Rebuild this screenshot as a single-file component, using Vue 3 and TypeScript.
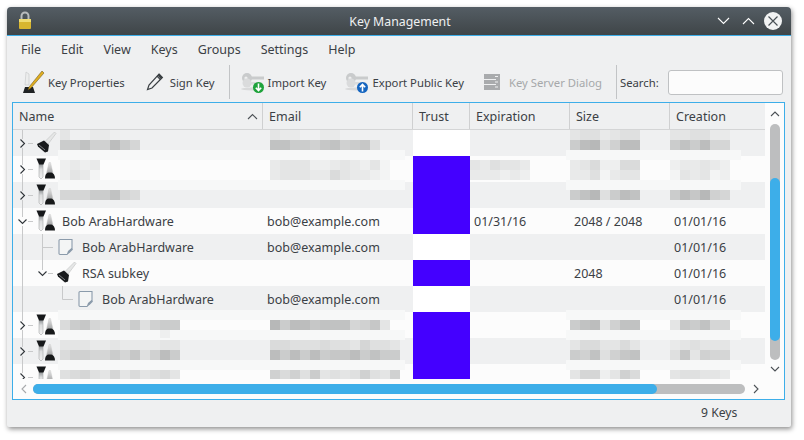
<script setup lang="ts">
interface Blur { top: number; lines: string[] }
interface Row {
  level: number
  tree: string[]
  icon: 'pair' | 'key' | 'note'
  name?: string
  email?: string
  trust: boolean
  exp?: string
  size?: string
  created?: string
  bName?: Blur
  bEmail?: Blur
  bExp?: Blur
  bSize?: Blur
  bCreated?: Blur
}

const rows: Row[] = [
  { level: 0, tree: ['closed'], icon: 'key', trust: false,
    bName: { top: 0, lines: ['c..dde.', '77588479'] },
    bEmail: { top: 0, lines: ['cdd..dd', '5577865876b'] },
    bSize: { top: 0, lines: ['cbbdcbb', '743b844'] },
    bCreated: { top: 0, lines: ['ccbbdd', '757499'] } },
  { level: 0, tree: ['closed'], icon: 'pair', trust: true,
    bName: { top: 4, lines: ['eded', 'ecdf'] },
    bEmail: { top: 4, lines: ['dccceedcdecf', 'dcccddacddef'] },
    bExp: { top: 4, lines: ['cdbccd', 'dddede'] },
    bSize: { top: 4, lines: ['dcaeeaa', 'ddbfdcc'] },
    bCreated: { top: 4, lines: ['eddcde', 'fcdcfe'] } },
  { level: 0, tree: ['closed'], icon: 'pair', trust: true,
    bName: { top: 8, lines: ['9997759a'] },
    bSize: { top: 8, lines: ['753b745'] },
    bCreated: { top: 8, lines: ['746389'] } },
  { level: 0, tree: ['open'], icon: 'pair', name: 'Bob ArabHardware', email: 'bob@example.com', trust: true,
    exp: '01/31/16', size: '2048 / 2048', created: '01/01/16' },
  { level: 1, tree: ['pass', 'tee'], icon: 'note', name: 'Bob ArabHardware', email: 'bob@example.com', trust: false,
    created: '01/01/16' },
  { level: 1, tree: ['pass', 'open'], icon: 'key', name: 'RSA subkey', trust: true, size: '2048', created: '01/01/16' },
  { level: 2, tree: ['pass', 'none', 'ell'], icon: 'note', name: 'Bob ArabHardware', email: 'bob@example.com', trust: false,
    created: '01/01/16' },
  { level: 0, tree: ['closed'], icon: 'pair', trust: true,
    bName: { top: 8, lines: ['a769a6a7b877', '..........e.'] },
    bEmail: { top: 8, lines: ['37446555986c'] },
    bSize: { top: 8, lines: ['754c855'] },
    bCreated: { top: 8, lines: ['c67599'] } },
  { level: 0, tree: ['closed'], icon: 'pair', trust: true,
    bName: { top: 2, lines: ['cccddcddddcc', 'a8899796b847'] },
    bEmail: { top: 2, lines: ['aabbbabbc9bbc', '4747476647577'] },
    bSize: { top: 2, lines: ['caaccac', '785b865'] },
    bCreated: { top: 2, lines: ['dcbccc', 'b6c899'] } },
  { level: 0, tree: ['closed'], icon: 'pair', trust: true,
    bName: { top: 6, lines: ['ba9bc9cacbac'] },
    bEmail: { top: 6, lines: ['8a8b7cbcb8bc8'] },
    bSize: { top: 6, lines: ['c99ec8a'] },
    bCreated: { top: 6, lines: ['cbbccd'] } },
]

const bands = [150, 180, 310, 330, 360].flatMap((y) => [
  { left: 45, top: y - 130, width: 347, height: 10 },
  { left: 553, top: y - 130, width: 175, height: 10 },
])

const menu = ['File', 'Edit', 'View', 'Keys', 'Groups', 'Settings', 'Help']
const columns = ['Name', 'Email', 'Trust', 'Expiration', 'Size', 'Creation']

function shade(c: string): string {
  if (c === '.') return 'transparent'
  const v = 168 + parseInt(c, 16) * 5
  return `rgb(${v},${v + 1},${v + 1})`
}
function chars(line: string): string[] {
  return line.split('')
}
</script>

<template>
  <div class="page">
    <div class="window">
      <header class="titlebar">
        <svg class="lock" width="14" height="19" viewBox="0 0 14 19">
          <path d="M3.500 8V5a3.500 3.500 0 0 1 7 0v3" fill="none" stroke="#b9bcbd" stroke-width="2" />
          <rect x="1" y="8" width="12" height="10" rx="1" fill="#d8b62f" />
          <rect x="1" y="8" width="12" height="3" fill="#efdc72" />
        </svg>
        <span class="title">Key Management</span>
        <div class="winbtns">
          <svg width="13" height="8" viewBox="0 0 13 8"><path d="M1 1l5.500 5.500L12 1" fill="none" stroke="#fcfcfc" stroke-width="1.100" /></svg>
          <svg width="13" height="8" viewBox="0 0 13 8"><path d="M1 7l5.500-5.500L12 7" fill="none" stroke="#fcfcfc" stroke-width="1.100" /></svg>
          <svg class="close" width="18" height="18" viewBox="0 0 18 18"><circle cx="9" cy="9" r="9" fill="#f2f3f3" /><path d="M4.500 4.500l9 9M13.500 4.500l-9 9" stroke="#4a5156" stroke-width="1.200" /></svg>
        </div>
      </header>

      <nav class="menubar">
        <span v-for="m in menu" :key="m">{{ m }}</span>
      </nav>

      <div class="toolbar">
        <div class="tool first">
          <svg width="24" height="24" viewBox="0 0 24 24">
            <path d="M5 2l3 2v11H4z" fill="#eceded" stroke="#c4c6c7" stroke-width=".6" />
            <path d="M2 23l2-6h8l2 6z" fill="#1f2224" />
            <path d="M21 1L8 17l-1 3 3-2L23 3z" fill="#e0ae21" stroke="#5c4a12" stroke-width=".5" />
          </svg>
          <span>Key Properties</span>
        </div>
        <div class="tool sign">
          <svg width="18" height="20" viewBox="0 0 18 20">
            <path d="M13 2l3.400 3.400L6 16l-4.500 1.600L3 13z" fill="none" stroke="#3a3f43" stroke-width="1.200" />
            <path d="M11 4.200l3.400 3.400" stroke="#3a3f43" stroke-width="1.200" />
            <path d="M13 2l3.400 3.400-1.600 1.600L11.400 3.600z" fill="#3a3f43" />
          </svg>
          <span>Sign Key</span>
        </div>
        <div class="sep sep-a"></div>
        <div class="tool imp">
          <svg width="24" height="24" viewBox="0 0 24 24">
            <ellipse cx="11" cy="19" rx="11" ry="1.500" fill="#d8d9da" />
            <circle cx="6" cy="8" r="5" fill="#c9cbcc" />
            <circle cx="5" cy="8" r="1.600" fill="#eeefef" />
            <rect x="10" y="6.500" width="13" height="3" fill="#c9cbcc" />
            <circle cx="6" cy="13" r="4.500" fill="#dadbdc" />
            <rect x="10" y="12" width="11" height="2.500" fill="#dadbdc" />
            <circle cx="17.500" cy="17.500" r="5.500" fill="#1fa33c" />
            <path d="M17.500 13.500v7M14.800 17.700l2.700 2.800 2.700-2.800" fill="none" stroke="#fff" stroke-width="1.600" />
          </svg>
          <span>Import Key</span>
        </div>
        <div class="tool exp">
          <svg width="24" height="24" viewBox="0 0 24 24">
            <ellipse cx="11" cy="19" rx="11" ry="1.500" fill="#d8d9da" />
            <circle cx="6" cy="8" r="5" fill="#c9cbcc" />
            <circle cx="5" cy="8" r="1.600" fill="#eeefef" />
            <rect x="10" y="6.500" width="13" height="3" fill="#c9cbcc" />
            <circle cx="6" cy="13" r="4.500" fill="#dadbdc" />
            <rect x="10" y="12" width="11" height="2.500" fill="#dadbdc" />
            <circle cx="17.500" cy="17.500" r="5.500" fill="#1565c0" />
            <path d="M17.500 21.500v-7M14.800 17.300l2.700-2.800 2.700 2.800" fill="none" stroke="#fff" stroke-width="1.600" />
          </svg>
          <span>Export Public Key</span>
        </div>
        <div class="tool srv">
          <svg width="16" height="16" viewBox="0 0 16 16">
            <rect width="16" height="16" fill="#a9abad" />
            <path d="M0 5.500h12M0 10.500h12M11 2.500h3M11 8h3M11 13h3" stroke="#eff0f1" stroke-width="1" />
          </svg>
          <span>Key Server Dialog</span>
        </div>
        <div class="sep sep-b"></div>
        <label class="search">Search:<input type="text" /></label>
      </div>

      <section class="frame">
        <div class="view">
          <div class="table">
            <div class="head">
              <div v-for="c in columns" :key="c" class="hcell">
                {{ c }}
                <svg v-if="c === 'Name'" class="sort" width="11" height="7" viewBox="0 0 11 7"><path d="M1 6l4.500-4.500L10 6" fill="none" stroke="#4d5257" stroke-width="1.100" /></svg>
              </div>
            </div>
            <div class="body">
              <div v-for="(r, i) in rows" :key="i" class="row">
                <div class="cell namecell">
                  <svg v-for="(t, j) in r.tree" :key="j" class="branch" width="20" height="26" viewBox="0 0 20 26">
                    <path v-if="t === 'closed' || t === 'open'" :d="j === 0 ? 'M9.500 0V9M9.500 18V26M15 13.500H20' : 'M9.500 0V10M15 13.500H20'" stroke="#c8c9ca" fill="none" />
                    <path v-if="t === 'closed'" d="M7.500 9.500l4 4-4 4" fill="none" stroke="#31363b" stroke-width="1.100" />
                    <path v-if="t === 'open'" d="M5.500 11.500l4 4 4-4" fill="none" stroke="#31363b" stroke-width="1.100" />
                    <path v-if="t === 'pass'" d="M9.500 0V26" stroke="#c8c9ca" />
                    <path v-if="t === 'tee'" d="M9.500 0V26M9.500 13.500H20" stroke="#c8c9ca" fill="none" />
                    <path v-if="t === 'ell'" d="M9.500 0V13.500H20" stroke="#c8c9ca" fill="none" />
                  </svg>
                  <div class="iconbox">
                    <svg v-if="r.icon === 'pair'" width="22" height="24" viewBox="0 0 22 24">
                      <defs>
                        <linearGradient id="shaft" x1="0" y1="0" x2="0" y2="1"><stop offset="0" stop-color="#8d9194" /><stop offset=".35" stop-color="#dcddde" /><stop offset="1" stop-color="#f2f2f2" /></linearGradient>
                        <linearGradient id="cone" x1="0" y1="0" x2="0" y2="1"><stop offset="0" stop-color="#e6e6e6" /><stop offset="1" stop-color="#a4a5a6" /></linearGradient>
                      </defs>
                      <path d="M3 7h4v13l-2 2-2-2z" fill="url(#shaft)" stroke="#a6a8a9" stroke-width=".6" />
                      <path d="M.5 1.500h9.500L7.500 7.500h-4.500z" fill="#16181a" />
                      <path d="M13 5.500h1.500l2.500 10.500h-6.500z" fill="url(#cone)" stroke="#c4c5c6" stroke-width=".4" />
                      <path d="M9 21.500c0-3 1-5.500 3-6h3.500c2 .5 3.500 3 3.500 6z" fill="#17191a" />
                    </svg>
                    <svg v-else-if="r.icon === 'key'" width="22" height="24" viewBox="0 0 22 24">
                      <path d="M18.500 1l1.500 1.500-9 12-3-3z" fill="#e5e6e6" stroke="#b6b8b9" stroke-width=".5" />
                      <path d="M8 9.500l5 4.500-1 6.500-3 1-7-6-1-2.500z" fill="#191b1d" />
                      <path d="M3 14l6 5" stroke="#7d8083" stroke-width="1" />
                    </svg>
                    <svg v-else width="16" height="18" viewBox="0 0 16 18" class="note">
                      <path d="M1 2.500a1 1 0 0 1 1-1h12v9l-5 6H2a1 1 0 0 1-1-1z" fill="#f4f5f5" stroke="#8b9bab" stroke-width="1.100" />
                      <path d="M9 16l1-3 3.500-3 1.500 1.500-3.500 3.500z" fill="#8b9bab" />
                    </svg>
                  </div>
                  <span v-if="r.name">{{ r.name }}</span>
                  <div v-if="r.bName" class="blur" :style="{ marginTop: r.bName.top + 'px' }">
                    <div v-for="(l, k) in r.bName.lines" :key="k" class="bline">
                      <i v-for="(c, n) in chars(l)" :key="n" :style="{ background: shade(c) }"></i>
                    </div>
                  </div>
                </div>

                <div class="cell emailcell">
                  <span v-if="r.email">{{ r.email }}</span>
                  <div v-if="r.bEmail" class="blur" :style="{ marginTop: r.bEmail.top + 'px' }">
                    <div v-for="(l, k) in r.bEmail.lines" :key="k" class="bline">
                      <i v-for="(c, n) in chars(l)" :key="n" :style="{ background: shade(c) }"></i>
                    </div>
                  </div>
                </div>

                <div class="cell" :class="r.trust ? 'trusted' : 'untrusted'"></div>

                <div class="cell expcell">
                  <span v-if="r.exp">{{ r.exp }}</span>
                  <div v-if="r.bExp" class="blur" :style="{ marginTop: r.bExp.top + 'px' }">
                    <div v-for="(l, k) in r.bExp.lines" :key="k" class="bline">
                      <i v-for="(c, n) in chars(l)" :key="n" :style="{ background: shade(c) }"></i>
                    </div>
                  </div>
                </div>

                <div class="cell numcell">
                  <span v-if="r.size">{{ r.size }}</span>
                  <div v-if="r.bSize" class="blur" :style="{ marginTop: r.bSize.top + 'px' }">
                    <div v-for="(l, k) in r.bSize.lines" :key="k" class="bline">
                      <i v-for="(c, n) in chars(l)" :key="n" :style="{ background: shade(c) }"></i>
                    </div>
                  </div>
                </div>

                <div class="cell numcell">
                  <span v-if="r.created">{{ r.created }}</span>
                  <div v-if="r.bCreated" class="blur" :style="{ marginTop: r.bCreated.top + 'px' }">
                    <div v-for="(l, k) in r.bCreated.lines" :key="k" class="bline">
                      <i v-for="(c, n) in chars(l)" :key="n" :style="{ background: shade(c) }"></i>
                    </div>
                  </div>
                </div>
              </div>

              <div
                v-for="(b, i) in bands"
                :key="'b' + i"
                class="band"
                :style="{ left: b.left + 'px', top: b.top + 'px', width: b.width + 'px', height: b.height + 'px' }"
              ></div>
            </div>
          </div>

          <aside class="vscroll">
            <svg width="10" height="7" viewBox="0 0 10 7"><path d="M1 6l4-4 4 4" fill="none" stroke="#4d5257" stroke-width="1.100" /></svg>
            <div class="vtrack"><div class="vthumb"></div></div>
            <svg width="10" height="7" viewBox="0 0 10 7"><path d="M1 1l4 4 4-4" fill="none" stroke="#4d5257" stroke-width="1.100" /></svg>
          </aside>
        </div>

        <div class="hscroll">
          <svg width="7" height="10" viewBox="0 0 7 10"><path d="M6 1L2 5l4 4" fill="none" stroke="#a8aaac" stroke-width="1.100" /></svg>
          <div class="htrack"><div class="hthumb"></div></div>
          <svg width="7" height="10" viewBox="0 0 7 10"><path d="M1 1l4 4-4 4" fill="none" stroke="#4d5257" stroke-width="1.100" /></svg>
        </div>
      </section>

      <footer class="status">9 Keys</footer>
    </div>
  </div>
</template>

<style scoped>
.page {
  width: 804px;
  height: 440px;
  padding: 7px 13px 0 7px;
  box-sizing: border-box;
  background: #fff;
  font-family: "Noto Sans", "Open Sans", sans-serif;
  font-size: 12.5px;
  color: #3b4045;
  overflow: hidden;
}
.window {
  width: 784px;
  height: 420px;
  background: #eff0f1;
  border-radius: 4px 4px 2px 2px;
  box-shadow: 1px 2px 5px rgba(0, 0, 0, 0.45);
  display: flex;
  flex-direction: column;
  overflow: hidden;
}
.titlebar {
  height: 28px;
  flex: none;
  border-bottom: 1px solid #3daee9;
  background: linear-gradient(#545d64, #3f4548);
  color: #eff0f1;
  display: grid;
  grid-template-columns: 1fr auto 1fr;
  align-items: center;
  padding: 0 9px 0 11px;
}
.lock { display: block; margin-top: -2px; }
.title { font-size: 12.3px; }
.winbtns {
  justify-self: end;
  display: flex;
  align-items: center;
  gap: 12px;
}
.close { margin-left: -3px; }
.menubar {
  height: 26px;
  padding-bottom: 4px;
  flex: none;
  display: flex;
  align-items: center;
  padding-left: 14px;
  gap: 20px;
}
.toolbar {
  height: 32px;
  padding-bottom: 4px;
  flex: none;
  display: flex;
  align-items: center;
  padding-left: 14px;
  font-size: 11.3px;
}
.tool { display: flex; align-items: center; gap: 3px; white-space: nowrap; }
.sign { margin-left: 21px; gap: 6px; }
.sep { width: 1px; height: 34px; background: #c2c4c6; }
.sep-a { margin-left: 14px; }
.imp { margin-left: 11px; gap: 3px; }
.exp { margin-left: 19px; gap: 3px; }
.srv { margin-left: 20px; gap: 9px; color: #a6a8aa; }
.sep-b { margin-left: 14px; }
.search { display: flex; align-items: center; gap: 9px; margin-left: 3px; }
.search input {
  width: 115px;
  height: 25px;
  box-sizing: border-box;
  border: 1px solid #bfc1c3;
  border-radius: 3px;
  background: #fcfcfc;
  padding: 0;
  margin: 0;
  outline: none;
}
.frame {
  width: 773px;
  height: 298px;
  margin-left: 5px;
  box-sizing: border-box;
  border: 1px solid #3daee9;
  background: #fcfcfc;
  display: flex;
  flex-direction: column;
  flex: none;
}
.view { display: flex; height: 276px; flex: none; }
.table { width: 752px; flex: none; }
.head {
  display: grid;
  grid-template-columns: 250px 150px 57px 100px 100px 95px;
  height: 27px;
  box-sizing: border-box;
  border-bottom: 1px solid #d4d5d6;
  background: #eff0f1;
}
.hcell {
  display: flex;
  align-items: center;
  padding-left: 6px;
  border-right: 1px solid #cfd0d1;
  box-sizing: border-box;
}
.hcell:last-child { border-right: 0; }
.sort { margin-left: auto; margin-right: 4px; }
.body { position: relative; height: 249px; overflow: hidden; }
.row {
  display: grid;
  grid-template-columns: 250px 150px 57px 100px 100px 95px;
  height: 26px;
  overflow: hidden;
}
.row:nth-child(odd) { background: #eff0f1; }
.row:nth-child(even) { background: #fcfcfc; }
.cell { display: flex; height: 26px; align-items: center; white-space: nowrap; overflow: hidden; }
.namecell { overflow: visible; }
.branch { flex: none; display: block; }
.iconbox {
  width: 29px;
  height: 26px;
  flex: none;
  display: flex;
  align-items: center;
  padding-left: 3px;
  box-sizing: border-box;
}
.note { margin-left: 2px; }
.emailcell { padding-left: 4px; }
.emailcell .blur { margin-left: 3px; }
.expcell, .numcell { padding-left: 4px; }
.expcell .blur { margin-left: -4px; }
.numcell .blur { margin-left: -4px; }
.trusted { background: #4400ff; }
.untrusted { background: #fff; }
.blur { align-self: flex-start; position: relative; z-index: 1; }
.bline { display: flex; height: 10px; }
.bline i { display: block; width: 10px; height: 10px; flex: none; }
.namecell .blur { margin-left: -2px; }
.band { position: absolute; background: #f7f8f8; }
.vscroll {
  width: 19px;
  flex: none;
  box-sizing: border-box;
  padding: 7px 0 0 5px;
  display: flex;
  flex-direction: column;
  align-items: flex-start;
  background: #fcfcfc;
}
.vtrack {
  width: 10px;
  height: 236px;
  margin: 7px 0 6px;
  border-radius: 5px;
  background: #bdbebf;
  flex: none;
  padding-top: 54px;
  box-sizing: border-box;
}
.vthumb { width: 10px; height: 163px; border-radius: 5px; background: #3daee9; }
.hscroll {
  flex: 1;
  display: flex;
  align-items: center;
  padding-left: 7px;
  background: #fcfcfc;
}
.htrack {
  width: 712px;
  height: 10px;
  margin: 0 8px 0 6px;
  border-radius: 5px;
  background: #bdbebf;
}
.hthumb { width: 624px; height: 10px; border-radius: 5px; background: #3daee9; }
.status { padding: 4px 0 0 694px; white-space: nowrap; font-size: 12.2px; }
</style>
